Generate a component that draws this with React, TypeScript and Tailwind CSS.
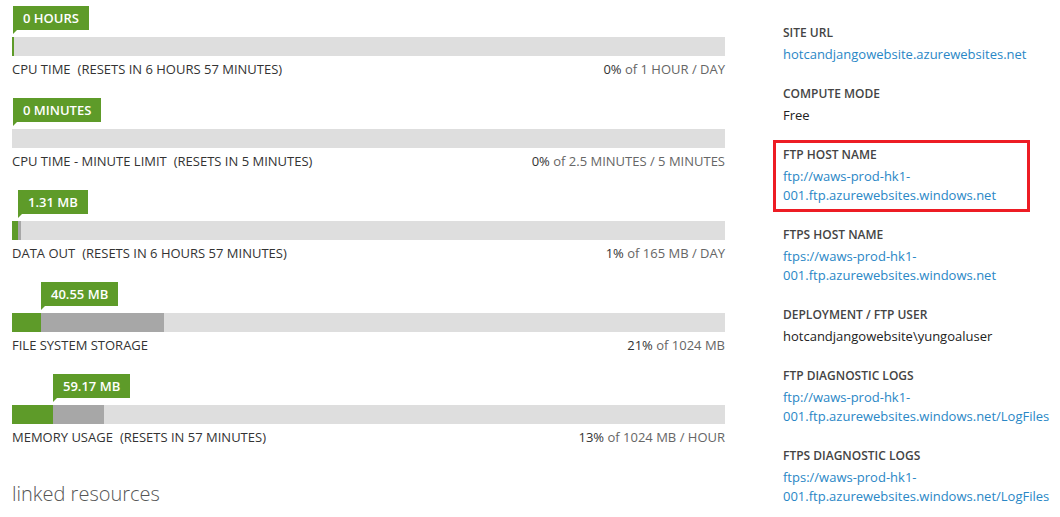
import React from "react";

type Meter = {
  badge: string;
  used: number;
  extra: number;
  title: string;
  note?: string;
  pct: string;
  of: string;
};

const meters: Meter[] = [
  { badge: "0 HOURS", used: 2, extra: 0, title: "CPU TIME", note: "(RESETS IN 6 HOURS 57 MINUTES)", pct: "0%", of: "of 1 HOUR / DAY" },
  { badge: "0 MINUTES", used: 0, extra: 0, title: "CPU TIME - MINUTE LIMIT", note: "(RESETS IN 5 MINUTES)", pct: "0%", of: "of 2.5 MINUTES / 5 MINUTES" },
  { badge: "1.31 MB", used: 6, extra: 3, title: "DATA OUT", note: "(RESETS IN 6 HOURS 57 MINUTES)", pct: "1%", of: "of 165 MB / DAY" },
  { badge: "40.55 MB", used: 29, extra: 123, title: "FILE SYSTEM STORAGE", pct: "21%", of: "of 1024 MB" },
  { badge: "59.17 MB", used: 41, extra: 51, title: "MEMORY USAGE", note: "(RESETS IN 57 MINUTES)", pct: "13%", of: "of 1024 MB / HOUR" },
];

const props: { label: string; value: string[]; link?: boolean; marked?: boolean }[] = [
  { label: "SITE URL", value: ["hotcandjangowebsite.azurewebsites.net"], link: true },
  { label: "COMPUTE MODE", value: ["Free"] },
  { label: "FTP HOST NAME", value: ["ftp://waws-prod-hk1-", "001.ftp.azurewebsites.windows.net"], link: true, marked: true },
  { label: "FTPS HOST NAME", value: ["ftps://waws-prod-hk1-", "001.ftp.azurewebsites.windows.net"], link: true },
  { label: "DEPLOYMENT / FTP USER", value: ["hotcandjangowebsite\\yungoaluser"] },
  { label: "FTP DIAGNOSTIC LOGS", value: ["ftp://waws-prod-hk1-", "001.ftp.azurewebsites.windows.net/LogFiles"], link: true },
  { label: "FTPS DIAGNOSTIC LOGS", value: ["ftps://waws-prod-hk1-", "001.ftp.azurewebsites.windows.net/LogFiles"], link: true },
];

function UsageMeter({ m }: { m: Meter }) {
  return (
    <div className="mb-[19px]">
      <div style={{ marginLeft: m.used > 2 ? m.used : 1 }} className="relative w-fit">
        <div className="h-[24px] bg-[#5e9b29] px-[10px] text-[13px] font-semibold leading-[24px] text-white">
          {m.badge}
        </div>
        <div className="absolute left-0 top-[24px] h-0 w-0 border-r-[4px] border-t-[4px] border-r-transparent border-t-[#5e9b29]" />
      </div>
      <div className="mt-[7px] flex h-[19px] bg-[#dedede]">
        <div className="bg-[#5e9b29]" style={{ width: m.used }} />
        <div className="bg-[#a7a7a7]" style={{ width: m.extra }} />
      </div>
      <div className="mt-[3px] flex h-[20px] justify-between text-[13px] leading-[20px] text-[#333]">
        <span>
          {m.title}
          {m.note && <span className="ml-[7px]">{m.note}</span>}
        </span>
        <span>
          <span className="text-[#333]">{m.pct}</span>{" "}
          <span className="text-[#666]">{m.of}</span>
        </span>
      </div>
    </div>
  );
}

export default function App() {
  return (
    <div className="flex h-[517px] w-[1060px] overflow-hidden bg-white pl-[12px] font-['Open_Sans',sans-serif]">
      <div className="w-[713px] shrink-0 pt-[6px]">
        {meters.map((m) => (
          <UsageMeter key={m.title} m={m} />
        ))}
        <div className="mt-[33px] text-[20px] font-light leading-[28px] text-[#555]">
          linked resources
        </div>
      </div>
      <div className="ml-[58px] pt-[22px]">
        {props.map((p) => (
          <div key={p.label} className="relative mb-[19px]">
            {p.marked && (
              <div className="absolute -left-[10px] -top-[4px] h-[72px] w-[257px] border-[3px] border-[#ed1c24]" />
            )}
            <div className="text-[12px] font-semibold leading-[22px] text-[#444]">{p.label}</div>
            <div className={`mt-[1px] text-[13px] leading-[19px] ${p.link ? "text-[#2a87c6]" : "text-[#222]"}`}>
              {p.value.map((v) => (
                <div key={v}>{v}</div>
              ))}
            </div>
          </div>
        ))}
      </div>
    </div>
  );
}
